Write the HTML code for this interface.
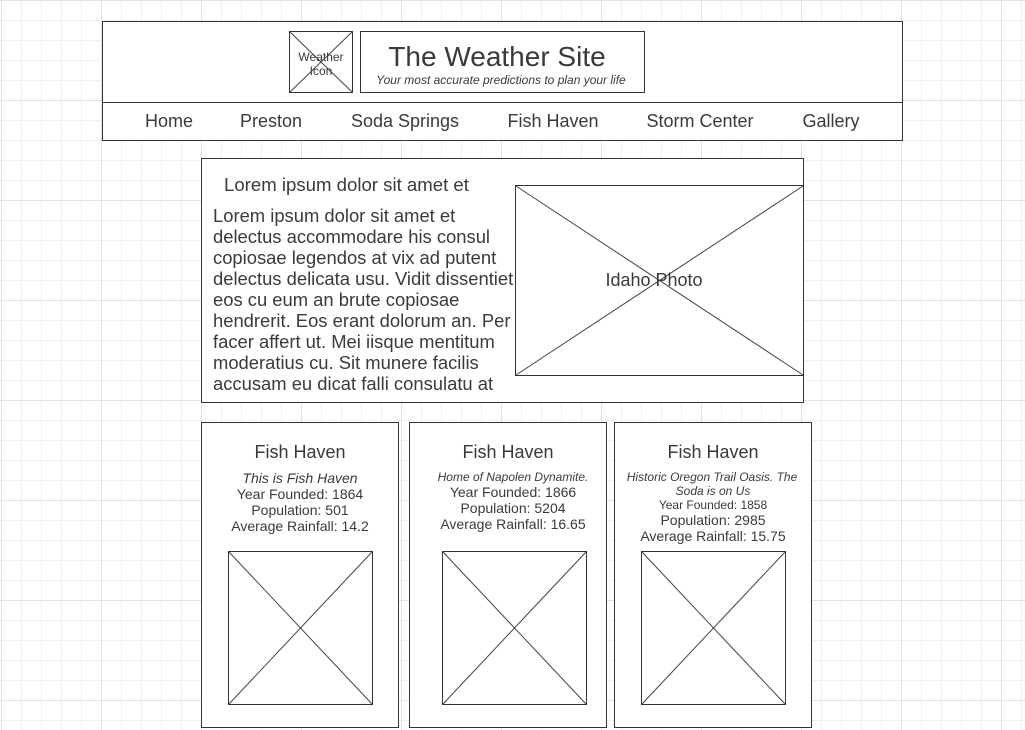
<!DOCTYPE html>
<html><head><meta charset="utf-8"><style>
html,body{margin:0;padding:0;width:1025px;height:730px;overflow:hidden;background:#fff;}
body{background-color:#fff;background-image:
linear-gradient(90deg,#e2e2e2 1px,transparent 1px),linear-gradient(#e2e2e2 1px,transparent 1px),
linear-gradient(90deg,#f0f0f0 1px,transparent 1px),linear-gradient(#f0f0f0 1px,transparent 1px);
background-size:100px 100px,100px 100px,20px 20px,20px 20px;background-position:1px 0,0 0,1px 0,0 0;}
svg{position:absolute;left:0;top:0;}
text{font-family:"Liberation Sans",sans-serif;fill:#3a3a3a;}
</style></head><body>
<svg width="1025" height="730" xmlns="http://www.w3.org/2000/svg">
<g stroke="#333" stroke-width="1" fill="#fff">
<rect x="102.5" y="21.5" width="800" height="119"/>
<line x1="102" y1="102.5" x2="903" y2="102.5"/>
<rect x="289.5" y="31.5" width="63" height="61"/>
<rect x="360.5" y="31.5" width="284" height="61"/>
<rect x="201.5" y="158.5" width="602" height="244"/>
<rect x="515.5" y="185.5" width="288" height="190"/>
<rect x="201.5" y="422.5" width="197" height="305"/>
<rect x="409.5" y="422.5" width="197" height="305"/>
<rect x="614.5" y="422.5" width="197" height="305"/>
<rect x="228.5" y="551.5" width="144" height="153"/>
<rect x="442.5" y="551.5" width="144" height="153"/>
<rect x="641.5" y="551.5" width="144" height="153"/>
</g>
<g stroke="#444" stroke-width="1">
<line x1="290" y1="32" x2="352" y2="92"/><line x1="352" y1="32" x2="290" y2="92"/>
<line x1="516" y1="186" x2="803" y2="375"/><line x1="803" y1="186" x2="516" y2="375"/>
<line x1="229" y1="552" x2="372" y2="704"/><line x1="372" y1="552" x2="229" y2="704"/>
<line x1="443" y1="552" x2="586" y2="704"/><line x1="586" y1="552" x2="443" y2="704"/>
<line x1="642" y1="552" x2="785" y2="704"/><line x1="785" y1="552" x2="642" y2="704"/>
</g>
<text x="321" y="61" font-size="12" text-anchor="middle" fill="#555">Weather</text>
<text x="321" y="75" font-size="12" text-anchor="middle" fill="#555">Icon</text>
<text x="497" y="66" font-size="28" text-anchor="middle">The Weather Site</text>
<text x="501" y="84" font-size="12" font-style="italic" text-anchor="middle">Your most accurate predictions to plan your life</text>
<g font-size="18" text-anchor="middle">
<text x="169" y="127">Home</text><text x="271" y="127">Preston</text><text x="405" y="127">Soda Springs</text>
<text x="553" y="127">Fish Haven</text><text x="700" y="127">Storm Center</text><text x="831" y="127">Gallery</text>
</g>
<text x="224" y="191" font-size="18.6">Lorem ipsum dolor sit amet et</text>
<g font-size="18.4">
<text x="213" y="222">Lorem ipsum dolor sit amet et</text>
<text x="213" y="243">delectus accommodare his consul</text>
<text x="213" y="264">copiosae legendos at vix ad putent</text>
<text x="213" y="285">delectus delicata usu. Vidit dissentiet</text>
<text x="213" y="306">eos cu eum an brute copiosae</text>
<text x="213" y="327">hendrerit. Eos erant dolorum an. Per</text>
<text x="213" y="348">facer affert ut. Mei iisque mentitum</text>
<text x="213" y="369">moderatius cu. Sit munere facilis</text>
<text x="213" y="390">accusam eu dicat falli consulatu at</text>
</g>
<text x="654" y="286" font-size="18" text-anchor="middle">Idaho Photo</text>
<g text-anchor="middle">
<text x="300" y="458" font-size="18">Fish Haven</text>
<text x="300" y="483" font-size="14" font-style="italic">This is Fish Haven</text>
<text x="300" y="499" font-size="14">Year Founded: 1864</text>
<text x="300" y="515" font-size="14">Population: 501</text>
<text x="300" y="531" font-size="14">Average Rainfall: 14.2</text>
<text x="508" y="458" font-size="18">Fish Haven</text>
<text x="513" y="481" font-size="12" font-style="italic">Home of Napolen Dynamite.</text>
<text x="513" y="497" font-size="14">Year Founded: 1866</text>
<text x="513" y="513" font-size="14">Population: 5204</text>
<text x="513" y="529" font-size="14">Average Rainfall: 16.65</text>
<text x="713" y="458" font-size="18">Fish Haven</text>
<text x="712" y="481" font-size="12" font-style="italic">Historic Oregon Trail Oasis. The</text>
<text x="713" y="495" font-size="12" font-style="italic">Soda is on Us</text>
<text x="713" y="509" font-size="12">Year Founded: 1858</text>
<text x="713" y="525" font-size="14">Population: 2985</text>
<text x="713" y="541" font-size="14">Average Rainfall: 15.75</text>
</g>
</svg>
</body></html>
